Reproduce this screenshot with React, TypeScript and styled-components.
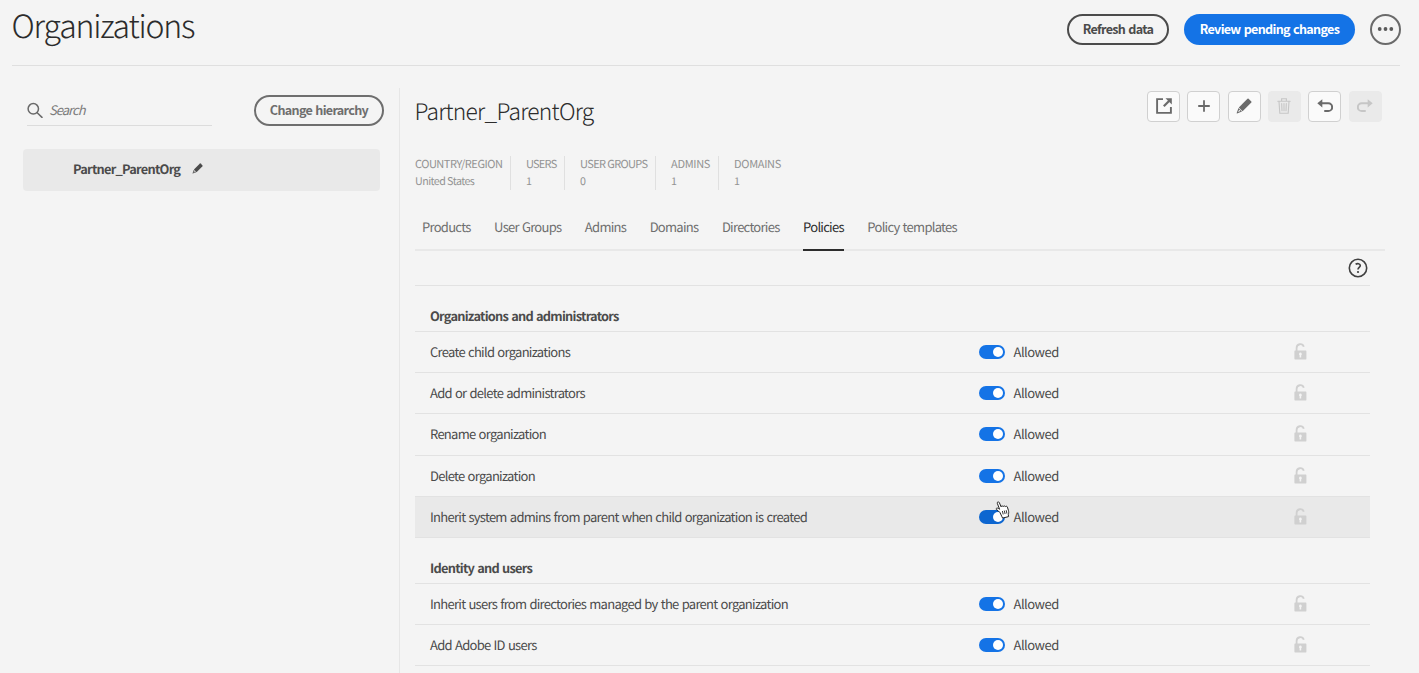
import React from "react";
import styled, { createGlobalStyle, css } from "styled-components";

const GlobalStyle = createGlobalStyle`
  *, *::before, *::after { box-sizing: border-box; }
  body {
    margin: 0;
    background: #f4f4f4;
    color: #4b4b4b;
    font-family: "Noto Sans CJK SC", "Noto Sans", sans-serif;
    font-size: 13px;
    line-height: 18px;
    letter-spacing: -0.72px;
    word-spacing: 0.9px;
    text-rendering: geometricPrecision;
    overflow: hidden;
  }
  button { font-family: inherit; margin: 0; }
  h1, h2, h3, p { margin: 0; }
`;

const Page = styled.div`
  height: 673px;
  padding: 0 19px 0 12px;
  display: flex;
  flex-direction: column;
  overflow: hidden;
`;

const Header = styled.header`
  height: 66px;
  flex: none;
  display: flex;
  justify-content: space-between;
  border-bottom: 1px solid #dfdfdf;
`;

const PageTitle = styled.h1`
  font-size: 32px;
  font-weight: 300;
  line-height: 40px;
  padding-top: 5px;
  letter-spacing: -1.2px;
  margin-left: -0.5px;
  color: #2c2c2c;
`;

const HeaderActions = styled.div`
  display: flex;
  gap: 15px;
  padding-top: 14px;
  margin-right: -1px;
`;

const PillButton = styled.button<{ $width: number; $tone: "dark" | "grey" | "primary" }>`
  width: ${(p) => p.$width}px;
  height: 31px;
  padding: 0 0 1px;
  border-radius: 16px;
  font-size: 12.6px;
  line-height: 18px;
  font-weight: 700;
  letter-spacing: -0.68px;
  word-spacing: 0.9px;
  white-space: nowrap;
  background: transparent;
  ${(p) =>
    p.$tone === "primary"
      ? css`
          border: 0;
          background: #1473e6;
          color: #fff;
        `
      : p.$tone === "dark"
        ? css`
            border: 2px solid #4b4b4b;
            color: #4b4b4b;
          `
        : css`
            border: 2px solid #6e6e6e;
            color: #6e6e6e;
          `}
`;

const MoreButton = styled.button`
  width: 31px;
  height: 31px;
  border: 2px solid #6a6a6a;
  border-radius: 50%;
  background: transparent;
  padding: 0;
  display: flex;
  align-items: center;
  justify-content: center;
`;

const Body = styled.div`
  flex: 1;
  display: flex;
  padding-top: 22px;
  min-height: 0;
`;

const Sidebar = styled.aside`
  width: 388px;
  flex: none;
  padding: 7px 15px 0 11px;
  border-right: 1px solid #e6e6e6;
`;

const SearchRow = styled.div`
  display: flex;
  justify-content: space-between;
  height: 31px;
  padding-left: 4px;
`;

const SearchField = styled.label`
  width: 185px;
  display: flex;
  align-items: center;
  border-bottom: 1px solid #dcdcdc;
`;

const SearchPlaceholder = styled.span`
  margin-left: 6px;
  font-style: italic;
  color: #7c7c7c;
  letter-spacing: -0.98px;
`;

const OrgItem = styled.div`
  width: 357px;
  height: 42px;
  margin-top: 23px;
  padding: 0 0 2px 50px;
  border-radius: 4px;
  background: #e9e9e9;
  display: flex;
  align-items: center;
  gap: 12px;
  font-size: 12.8px;
  font-weight: 700;
  letter-spacing: -0.75px;
  svg { margin-bottom: 2px; }
`;

const Main = styled.main`
  width: 970px;
  margin-left: 15px;
  display: flex;
  flex-direction: column;
`;

const OrgHeader = styled.div`
  display: flex;
  justify-content: space-between;
  height: 68px;
  padding: 2.6px 3.5px 0 0;
`;

const OrgName = styled.h2`
  font-size: 22.8px;
  line-height: 30px;
  padding-top: 5px;
  margin-left: -0.6px;
  font-weight: 300;
  letter-spacing: -0.75px;
  color: #2c2c2c;
`;

const Toolbar = styled.div`
  display: flex;
  gap: 7.3px;
`;

const ToolButton = styled.button`
  width: 33px;
  height: 31px;
  border: 1px solid #d0d0d0;
  border-radius: 4px;
  background: #fafafa;
  color: #6a6a6a;
  padding: 0;
  display: flex;
  align-items: center;
  justify-content: center;
  &:disabled {
    border-color: #eaeaea;
    background: #eaeaea;
    color: #c6c6c6;
  }
`;

const Stats = styled.dl`
  display: flex;
  height: 34px;
  margin: 0;
`;

const Stat = styled.div<{ $width: number; $tracking: number }>`
  width: ${(p) => p.$width}px;
  margin-right: 15px;
  border-right: 1px solid #e0e0e0;
  font-size: 11px;
  line-height: 17px;
  color: #929292;
  white-space: nowrap;
  word-spacing: 0;
  &:last-child {
    border-right: 0;
  }
  dt, dd { margin: 0; }
  dt { letter-spacing: ${(p) => p.$tracking}px; }
  dd {
    font-size: 10.7px;
    letter-spacing: -0.55px;
  }
`;

const Tabs = styled.nav`
  display: flex;
  gap: 23.5px;
  height: 61px;
  padding: 28px 0 0 7px;
  border-bottom: 2px solid #e8e8e8;
`;

const Tab = styled.a<{ $active?: boolean }>`
  height: 33px;
  white-space: nowrap;
  color: ${(p) => (p.$active ? "#2c2c2c" : "#6e6e6e")};
  border-bottom: 2px solid ${(p) => (p.$active ? "#2c2c2c" : "transparent")};
`;

const Policies = styled.div`
  width: 955px;
`;

const HelpBar = styled.div`
  height: 35px;
  display: flex;
  justify-content: flex-end;
  padding: 7px 2px 0 0;
  border-bottom: 1px solid #e2e2e2;
`;

const SectionTitle = styled.h3`
  height: 46px;
  padding: 21px 15px 0;
  font-size: 12.8px;
  line-height: 18px;
  font-weight: 700;
  letter-spacing: -0.74px;
  border-bottom: 1px solid #e2e2e2;
`;

const PolicyRow = styled.div<{ $hover?: boolean }>`
  position: relative;
  height: 41.2px;
  padding: 0 63px 0 15px;
  display: grid;
  grid-template-columns: 549px 1fr auto;
  align-items: center;
  border-bottom: 1px solid #e2e2e2;
  background: ${(p) => (p.$hover ? "#e9e9e9" : "transparent")};
`;

const Toggle = styled.div`
  display: flex;
  align-items: center;
  gap: 9px;
  letter-spacing: -0.5px;
`;

const Track = styled.span<{ $hover?: boolean }>`
  width: 25.5px;
  height: 14px;
  border-radius: 7px;
  padding: 2px;
  display: flex;
  justify-content: flex-end;
  background: ${(p) => (p.$hover ? "#0d66d0" : "#1473e6")};
`;

const Knob = styled.span`
  width: 10px;
  height: 10px;
  border-radius: 50%;
  background: #fff;
`;

const Lock = styled.svg`
  margin-bottom: 1px;
`;

const Pointer = styled.svg`
  position: absolute;
  left: 580px;
  top: 4px;
`;

const SearchIcon = () => (
  <svg width="16" height="16" viewBox="0 0 16 16" fill="none" stroke="#6a6a6a" strokeWidth="1.5" strokeLinecap="round">
    <circle cx="6.3" cy="6.8" r="5.2" />
    <path d="M10.2 10.7 15 15.400" />
  </svg>
);

const PencilIcon = ({ size }: { size: number }) => (
  <svg width={size} height={size} viewBox="0 0 16 16" fill="currentColor">
    <path d="M11.500.8a.8.8 0 0 1 1.100 0l2.700 2.700a.8.8 0 0 1 0 1.100L6.600 13.300 2.800 9.500z" />
    <path d="M2.500 10.100.700 15.100a.25.25 0 0 0 .3.300L6 13.600zM3.200 11.700l1.300 1.300-2.500.9z" fillRule="evenodd" />
  </svg>
);

const OpenIcon = () => (
  <svg width="16" height="16" viewBox="0 0 16 16" fill="none" stroke="currentColor" strokeWidth="1.9">
    <path d="M7 1.1H1.1v13.8h13.8V9" />
    <path d="M7.8 8.2 13 3" strokeWidth="2.2" />
    <path d="M9.5.2h6.3v6.3z" fill="currentColor" stroke="none" />
  </svg>
);

const PlusIcon = () => (
  <svg width="12" height="12" viewBox="0 0 12 12" stroke="currentColor" strokeWidth="1.8" strokeLinecap="round">
    <path d="M6 .9v10.2M.9 6h10.2" />
  </svg>
);

const TrashIcon = () => (
  <svg width="14" height="16" viewBox="0 0 14 16" fill="none" stroke="currentColor" strokeWidth="1.1" strokeLinecap="round">
    <path d="M.8 3.2h12.4M4.6 3V.8h4.8V3M2 3.4l.8 11.8h8.4L12 3.4M4.7 5.6l.3 7.2M7 5.6v7.2M9.3 5.6 9 12.8" />
  </svg>
);

const UndoIcon = ({ flipped }: { flipped?: boolean }) => (
  <svg width="16" height="14" viewBox="0 0 16 14" fill="none" stroke="currentColor" strokeWidth="2" strokeLinecap="round">
    <g transform={flipped ? "translate(16 0) scale(-1 1)" : undefined}>
      <path d="M4 4.3h7.3a3.8 3.8 0 0 1 0 7.7H8" />
      <path d="M5.3.2v8.2L.3 4.3z" fill="currentColor" stroke="none" />
    </g>
  </svg>
);

const HelpIcon = () => (
  <svg width="20" height="20" viewBox="0 0 20 20" fill="none" stroke="#404040">
    <circle cx="10" cy="10" r="8.7" strokeWidth="1.6" />
    <path d="M7.6 6.2c1.7-1 4.7-.8 4.7 1.4 0 1.7-2.3 1.9-2.3 3.9" strokeWidth="1.6" />
    <circle cx="10" cy="14" r="1.1" fill="#404040" stroke="none" />
  </svg>
);

const LockIcon = () => (
  <Lock width="13" height="17" viewBox="0 0 13 17">
    <path d="M2.6 8V4.9a3.7 3.7 0 0 1 7.2-1.2" fill="none" stroke="#d0d0d0" strokeWidth="1.8" />
    <path d="M1 7.6h10.8a.6.6 0 0 1 .6.6v7.6a.6.6 0 0 1-.6.6H1a.6.6 0 0 1-.6-.6V8.2a.6.6 0 0 1 .6-.6z" fill="#d0d0d0" />
    <path d="M6.4 9.6a1.5 1.5 0 0 1 .8 2.7v2.1H5.6v-2.1a1.5 1.5 0 0 1 .8-2.7z" fill="#f4f4f4" />
  </Lock>
);

const HandPointer = () => (
  <Pointer width="16" height="18" viewBox="0 0 16 18">
    <path
      d="M5 11.6C3.8 10.2 2.6 9.2 1.6 8.7c-.9-.6-.3-1.9.9-1.6.8.2 1.5.7 2.1 1.2L2.3 2.3C1.9.9 3.7.2 4.3 1.6l1.8 4.2c.1-1.2 1.7-1.3 2.1-.2.3-1 1.8-1 2.2.1.5-.8 1.7-.6 2 .4l1 3.2c.5 1.9.3 3-.1 4.3l.3 2-6 1.5-.9-1.9z"
      fill="#fff"
      stroke="#222"
      strokeWidth="1"
      strokeLinejoin="round"
    />
    <path d="m7.4 10 .8 3.4M9.3 9.6l.8 3.4M11.2 9.2l.7 3.4" stroke="#222" strokeWidth=".9" />
  </Pointer>
);

const stats = [
  { label: "COUNTRY/REGION", value: "United States", width: 96, tracking: -0.47 },
  { label: "USERS", value: "1", width: 39, tracking: -0.75 },
  { label: "USER GROUPS", value: "0", width: 76, tracking: -0.62 },
  { label: "ADMINS", value: "1", width: 48, tracking: -0.3 },
  { label: "DOMAINS", value: "1", width: 60, tracking: -0.3 },
];

const tabs = ["Products", "User Groups", "Admins", "Domains", "Directories", "Policies", "Policy templates"];

const sections = [
  {
    title: "Organizations and administrators",
    rows: [
      "Create child organizations",
      "Add or delete administrators",
      "Rename organization",
      "Delete organization",
      "Inherit system admins from parent when child organization is created",
    ],
  },
  {
    title: "Identity and users",
    rows: ["Inherit users from directories managed by the parent organization", "Add Adobe ID users"],
  },
];

const hoveredRow = sections[0].rows[4];

export default function App() {
  return (
    <Page>
      <GlobalStyle />
      <Header>
        <PageTitle>Organizations</PageTitle>
        <HeaderActions>
          <PillButton $width={102} $tone="dark">Refresh data</PillButton>
          <PillButton $width={171} $tone="primary">Review pending changes</PillButton>
          <MoreButton aria-label="More actions">
            <svg width="17" height="5" viewBox="0 0 17 5" fill="#5a5a5a">
              <circle cx="2.7" cy="2" r="1.9" />
              <circle cx="8.5" cy="2" r="1.9" />
              <circle cx="14.3" cy="2" r="1.9" />
            </svg>
          </MoreButton>
        </HeaderActions>
      </Header>
      <Body>
        <Sidebar>
          <SearchRow>
            <SearchField>
              <SearchIcon />
              <SearchPlaceholder>Search</SearchPlaceholder>
            </SearchField>
            <PillButton $width={130} $tone="grey">Change hierarchy</PillButton>
          </SearchRow>
          <OrgItem>
            Partner_ParentOrg
            <PencilIcon size={11} />
          </OrgItem>
        </Sidebar>
        <Main>
          <OrgHeader>
            <OrgName>Partner_ParentOrg</OrgName>
            <Toolbar>
              <ToolButton aria-label="Open"><OpenIcon /></ToolButton>
              <ToolButton aria-label="Add"><PlusIcon /></ToolButton>
              <ToolButton aria-label="Edit"><PencilIcon size={16} /></ToolButton>
              <ToolButton aria-label="Delete" disabled><TrashIcon /></ToolButton>
              <ToolButton aria-label="Undo"><UndoIcon /></ToolButton>
              <ToolButton aria-label="Redo" disabled><UndoIcon flipped /></ToolButton>
            </Toolbar>
          </OrgHeader>
          <Stats>
            {stats.map((s) => (
              <Stat key={s.label} $width={s.width} $tracking={s.tracking}>
                <dt>{s.label}</dt>
                <dd>{s.value}</dd>
              </Stat>
            ))}
          </Stats>
          <Tabs>
            {tabs.map((tab) => (
              <Tab key={tab} $active={tab === "Policies"}>{tab}</Tab>
            ))}
          </Tabs>
          <Policies>
            <HelpBar><HelpIcon /></HelpBar>
            {sections.map((section) => (
              <section key={section.title}>
                <SectionTitle>{section.title}</SectionTitle>
                {section.rows.map((row) => (
                  <PolicyRow key={row} $hover={row === hoveredRow}>
                    <span>{row}</span>
                    <Toggle>
                      <Track $hover={row === hoveredRow}><Knob /></Track>
                      Allowed
                    </Toggle>
                    <LockIcon />
                    {row === hoveredRow && <HandPointer />}
                  </PolicyRow>
                ))}
              </section>
            ))}
          </Policies>
        </Main>
      </Body>
    </Page>
  );
}
